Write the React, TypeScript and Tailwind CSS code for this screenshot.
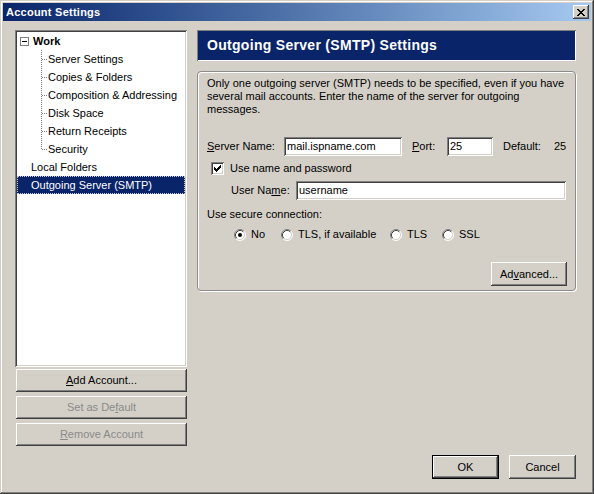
import React from 'react'

// ─── Win classic bevels ────────────────────────────────────────────────────────

const RAISED =
  'shadow-[inset_-1px_-1px_#404040,inset_1px_1px_#ffffff,inset_-2px_-2px_#808080,inset_2px_2px_#d4d0c8]'
const SUNKEN =
  'shadow-[inset_1px_1px_#808080,inset_-1px_-1px_#ffffff,inset_2px_2px_#404040,inset_-2px_-2px_#d4d0c8]'

const TREE_CHILDREN = [
  'Server Settings',
  'Copies & Folders',
  'Composition & Addressing',
  'Disk Space',
  'Return Receipts',
  'Security',
]

function CloseGlyph() {
  return (
    <svg width="8" height="7" viewBox="0 0 8 7" shapeRendering="crispEdges" aria-hidden="true">
      <path d="M0 0h2v1H0zM6 0h2v1H6zM1 1h2v1H1zM5 1h2v1H5zM2 2h4v1H2zM3 3h2v1H3zM2 4h4v1H2zM1 5h2v1H1zM5 5h2v1H5zM0 6h2v1H0zM6 6h2v1H6z" fill="#000" />
    </svg>
  )
}

function Radio({ checked }: { checked?: boolean }) {
  return (
    <svg width="12" height="12" viewBox="0 0 12 12" className="shrink-0" aria-hidden="true">
      <circle cx="6" cy="6" r="5" fill="#fff" />
      <path d="M2.11 9.89A5.5 5.5 0 0 1 9.89 2.11" fill="none" stroke="#808080" />
      <path d="M2.82 9.18A4.5 4.5 0 0 1 9.18 2.82" fill="none" stroke="#404040" />
      <path d="M9.89 2.11A5.5 5.5 0 0 1 2.11 9.89" fill="none" stroke="#ffffff" />
      <path d="M9.18 2.82A4.5 4.5 0 0 1 2.82 9.18" fill="none" stroke="#d4d0c8" />
      {checked && <circle cx="6" cy="6" r="2" fill="#000" />}
    </svg>
  )
}

function Checkbox() {
  return (
    <div className={`w-[13px] h-[13px] bg-white shrink-0 flex items-center justify-center ${SUNKEN}`}>
      <svg width="7" height="7" viewBox="0 0 7 7" shapeRendering="crispEdges" aria-hidden="true">
        <path d="M6 0h1v3H6zM5 1h1v3H5zM4 2h1v3H4zM3 3h1v3H3zM2 4h1v3H2zM1 3h1v3H1zM0 2h1v3H0z" fill="#000" />
      </svg>
    </div>
  )
}

function Btn({
  children,
  disabled,
  className = '',
}: {
  children: React.ReactNode
  disabled?: boolean
  className?: string
}) {
  return (
    <div
      className={`flex items-center justify-center bg-[#d4d0c8] ${RAISED} ${
        disabled ? 'text-[#8a8a8a]' : 'text-black'
      } ${className}`}
    >
      {children}
    </div>
  )
}

function Field({ value, className = '' }: { value: string; className?: string }) {
  return (
    <div className={`h-[19px] bg-white flex items-center pl-[3px] ${SUNKEN} ${className}`}>{value}</div>
  )
}

export default function App() {
  return (
    <div className="w-[594px] h-[494px] bg-[#d4d0c8] p-[3px] flex flex-col font-['Liberation_Sans',Arial,sans-serif] text-[11px] leading-[13px] text-black shadow-[inset_-1px_-1px_#404040,inset_1px_1px_#d4d0c8,inset_-2px_-2px_#808080,inset_2px_2px_#ffffff]">
      {/* Title bar */}
      <div className="h-[18px] flex items-center justify-between bg-gradient-to-r from-[#0a246a] to-[#a6caf0] pl-[3px] pr-[2px]">
        <span className="font-bold text-white tracking-[0.25px]">Account Settings</span>
        <div className={`w-[16px] h-[14px] flex items-center justify-center bg-[#d4d0c8] ${RAISED}`}>
          <CloseGlyph />
        </div>
      </div>

      <div className="flex-1 flex flex-col pl-[12px] pr-[15px] pt-[9px]">
        <div className="flex gap-[10px]">
          {/* Left column: account tree + buttons */}
          <div className="w-[172px] flex flex-col">
            <div className={`h-[337px] bg-white p-[2px] ${SUNKEN}`}>
              <div className="flex h-[18px] items-center pl-[3px]">
                <div className="w-[9px] h-[9px] border border-[#808080] bg-white flex items-center justify-center">
                  <div className="w-[5px] h-[1px] bg-black" />
                </div>
                <span className="ml-[4px] font-bold">Work</span>
              </div>
              {TREE_CHILDREN.map((label, idx) => {
                const last = idx === TREE_CHILDREN.length - 1
                return (
                  <div key={label} className="flex h-[18px] items-center pl-[24px]">
                    <svg width="6" height="18" className="shrink-0" aria-hidden="true">
                      <line x1="0.5" y1="0" x2="0.5" y2={last ? 9 : 18} stroke="#808080" strokeDasharray="1 1" />
                      <line x1="1" y1="9.5" x2="6" y2="9.5" stroke="#808080" strokeDasharray="1 1" />
                    </svg>
                    <span className="ml-[1px]">{label}</span>
                  </div>
                )
              })}
              <div className="flex h-[18px] items-center pl-[14px]">Local Folders</div>
              <div className="flex h-[18px] items-center pl-[13px] bg-[#0a246a] text-white border border-dotted border-[#c8c8d8]">
                Outgoing Server (SMTP)
              </div>
            </div>

            <div className="mt-[2px] ml-[1px] flex flex-col gap-[4px]">
              <Btn className="h-[23px] w-[171px]">
                <span>
                  <span className="underline">A</span>dd Account...
                </span>
              </Btn>
              <Btn disabled className="h-[23px] w-[171px]">
                <span>
                  Set as De<span className="underline">f</span>ault
                </span>
              </Btn>
              <Btn disabled className="h-[23px] w-[171px]">
                <span>
                  <span className="underline">R</span>emove Account
                </span>
              </Btn>
            </div>
          </div>

          {/* Right column: SMTP settings */}
          <div className="w-[379px] flex flex-col">
            <div className="h-[31px] flex items-center pl-[10px] bg-[#0a246a] text-white text-[14px] tracking-[0.3px] font-bold shadow-[inset_1px_1px_#808080,inset_-1px_-1px_#ffffff]">
              Outgoing Server (SMTP) Settings
            </div>

            <div className="mt-[10px] rounded-[4px] border border-[#8c8c8c] shadow-[1px_1px_#ffffff,inset_1px_1px_#ffffff] pl-[9px] pt-[5px] pb-[4px] flex flex-col">
              <p>
                Only one outgoing server (SMTP) needs to be specified, even if you have
                <br />
                several mail accounts. Enter the name of the server for outgoing
                <br />
                messages.
              </p>

              <div className="mt-[21px] h-[19px] flex items-center">
                <span className="w-[77px]">
                  <span className="underline">S</span>erver Name:
                </span>
                <Field value="mail.ispname.com" className="w-[118px]" />
                <span className="ml-[10px] w-[35px]">
                  <span className="underline">P</span>ort:
                </span>
                <Field value="25" className="w-[46px]" />
                <span className="ml-[10px] w-[51px]">Default:</span>
                <span>25</span>
              </div>

              <div className="mt-[6px] h-[13px] flex items-center pl-[4px]">
                <Checkbox />
                <span className="ml-[6px]">Use name and password</span>
              </div>

              <div className="mt-[6px] h-[19px] flex items-center pl-[24px]">
                <span className="w-[65px]">
                  User Na<span className="underline">m</span>e:
                </span>
                <Field value="username" className="w-[270px]" />
              </div>

              <div className="mt-[8px] h-[13px]">Use secure connection:</div>

              <div className="mt-[7px] h-[13px] flex items-center pl-[27px]">
                <div className="w-[47px] flex items-center gap-[5px]">
                  <Radio checked />
                  <span>No</span>
                </div>
                <div className="w-[109px] flex items-center gap-[5px]">
                  <Radio />
                  <span>TLS, if available</span>
                </div>
                <div className="w-[52px] flex items-center gap-[5px]">
                  <Radio />
                  <span>TLS</span>
                </div>
                <div className="flex items-center gap-[5px]">
                  <Radio />
                  <span>SSL</span>
                </div>
              </div>

              <Btn className="mt-[21px] self-end mr-[8px] h-[24px] w-[76px]">
                <span>
                  Ad<span className="underline">v</span>anced...
                </span>
              </Btn>
            </div>
          </div>
        </div>

        {/* Dialog buttons */}
        <div className="mt-[9px] flex justify-end gap-[10px]">
          <div className="border border-black">
            <Btn className="h-[22px] w-[65px]">OK</Btn>
          </div>
          <Btn className="h-[24px] w-[67px]">Cancel</Btn>
        </div>
      </div>
    </div>
  )
}
